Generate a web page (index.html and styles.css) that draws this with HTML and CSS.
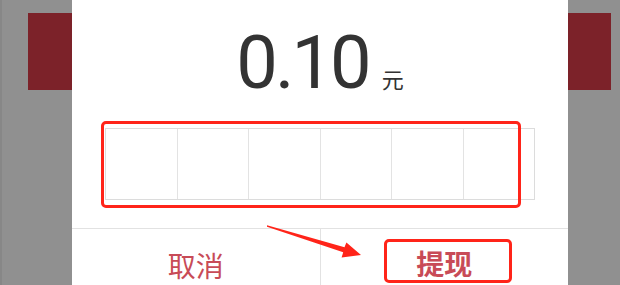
FILE: index.html
```html
<!DOCTYPE html>
<html lang="zh-CN">
  <head>
    <meta charset="utf-8" />
    <meta name="viewport" content="width=device-width, initial-scale=1.0" />
    <title>提现</title>
    <link rel="stylesheet" href="styles.css">
  </head>
  <body>
    <div class="page">
      <div class="side side-left">
        <div class="side-block"></div>
      </div>

      <div class="dialog">
        <div class="dialog-title">请输入六位数字支付密码</div>
        <div class="amount">0.10<span class="unit">元</span></div>

        <div class="pwd-wrap">
          <div class="pwd-box">
            <div class="pwd-cell"></div>
            <div class="pwd-cell"></div>
            <div class="pwd-cell"></div>
            <div class="pwd-cell"></div>
            <div class="pwd-cell"></div>
            <div class="pwd-cell"></div>
          </div>
          <div class="mark mark-box"></div>
        </div>

        <div class="dialog-actions">
          <div class="action action-cancel">取消</div>
          <div class="action action-ok"><span class="mark-btn">提现</span></div>
        </div>
      </div>

      <div class="side side-right">
        <div class="side-block"></div>
      </div>

      <!-- annotation arrow -->
      <svg class="arrow" width="620" height="285" viewBox="0 0 620 285">
        <polygon points="267,225.3 344.5,247.3 346.4,242.4 361,255 341.6,257.6 343.2,252.3 267,226.8" fill="#ff2419" />
      </svg>
    </div>
  </body>
</html>
```

FILE: styles.css
```css
/* General Reset */
* {
  margin: 0;
  padding: 0;
  box-sizing: border-box;
}

html, body {
  width: 620px;
  height: 285px;
  overflow: hidden;
  background-color: #909090;
  font-family: "Noto Sans CJK SC", "Noto Sans", sans-serif;
}

.page {
  position: relative;
  display: flex;
  width: 620px;
  height: 285px;
}

/* Dimmed background behind the dialog */
.side {
  background-color: #909090;
  padding-top: 13px;
}

.side-left {
  width: 72px;
  padding-left: 26px;
  border-left: 2px solid #878787;
}

.side-right {
  width: 52px;
}

.side-block {
  width: 100%;
  height: 77px;
  background-color: #7c2229;
}

.side-right .side-block {
  width: 43px;
}

/* Dialog */
.dialog {
  width: 496px;
  background-color: #fff;
  display: flex;
  flex-direction: column;
  align-items: center;
}

.dialog-title {
  margin-top: -31px;
  height: 32px;
  line-height: 32px;
  font-size: 28px;
  color: #888;
}

.amount {
  margin-top: 25px;
  height: 74px;
  line-height: 74px;
  font-family: Roboto, "Noto Sans", sans-serif;
  font-size: 74px;
  letter-spacing: -3px;
  color: #333;
}

.amount .unit {
  font-family: "Noto Sans CJK SC", sans-serif;
  font-size: 22px;
  line-height: 22px;
  letter-spacing: 0;
  margin-left: 13px;
}

/* Password boxes */
.pwd-wrap {
  position: relative;
  margin-top: 28px;
}

.pwd-box {
  display: flex;
  width: 430px;
  height: 72px;
  border: 1px solid #dcdcdc;
}

.pwd-cell {
  flex: 1;
  border-left: 1px solid #e3e3e3;
}

.pwd-cell:first-child {
  border-left: none;
}

/* Buttons */
.dialog-actions {
  display: flex;
  width: 100%;
  margin-top: 28px;
  border-top: 1px solid #e2e2e2;
}

.action {
  flex: 1;
  height: 72px;
  display: flex;
  justify-content: center;
  font-size: 28px;
  color: #c84b57;
}

.action-cancel {
  align-items: center;
}

.action-ok {
  border-left: 1px solid #e2e2e2;
  padding-top: 10px;
  font-weight: bold;
}

/* Red annotation marks */
.mark {
  position: absolute;
  border: 3px solid #ff2419;
  border-radius: 5px;
}

.mark-box {
  left: -4px;
  top: -7px;
  width: 420px;
  height: 87px;
}

.mark-btn {
  display: inline-block;
  width: 128px;
  height: 44px;
  margin-left: 8px;
  padding-top: 3px;
  padding-right: 8px;
  line-height: 36px;
  text-align: center;
  border: 3px solid #ff2419;
  border-radius: 5px;
}

.arrow {
  position: absolute;
  left: 0;
  top: 0;
}
```
